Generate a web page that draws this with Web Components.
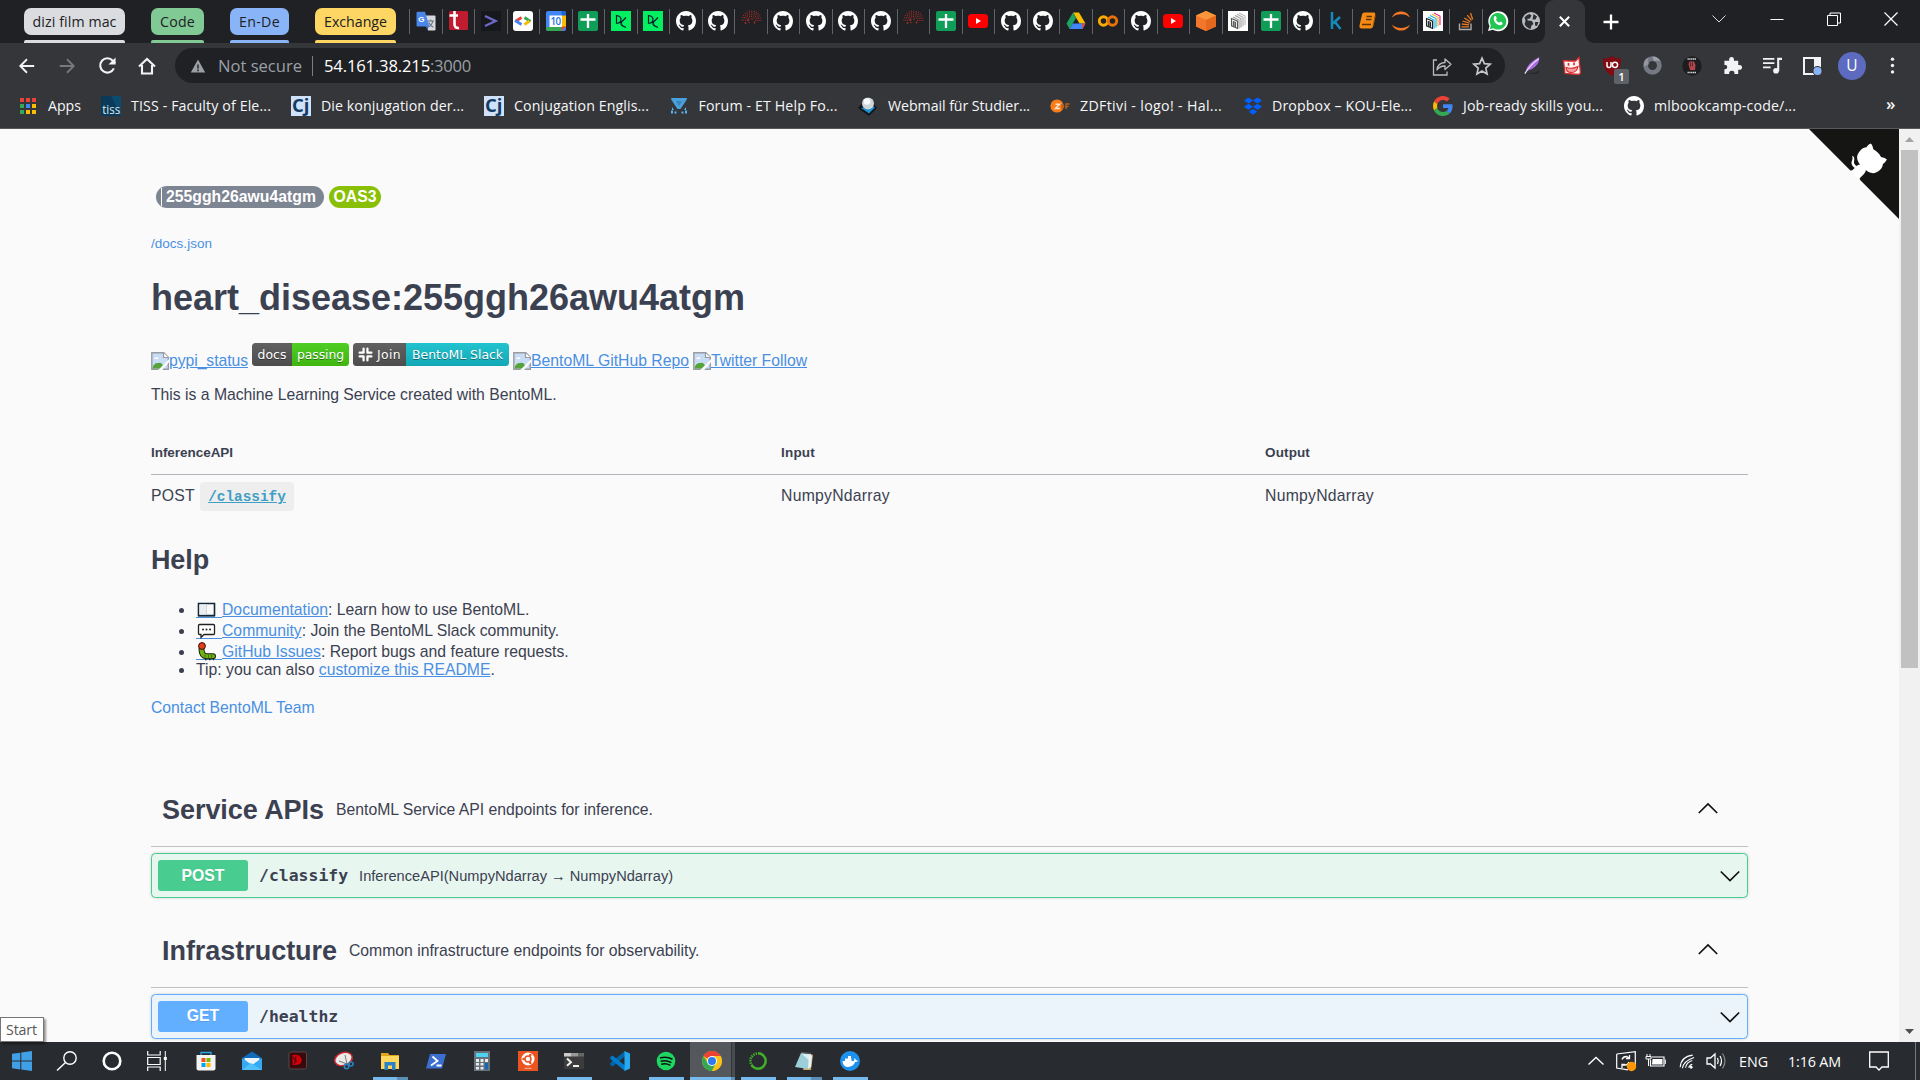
<!DOCTYPE html>
<html lang="en">
<head>
<meta charset="utf-8">
<title>heart_disease:255ggh26awu4atgm</title>
<style>
html,body{margin:0;padding:0;width:1920px;height:1080px;overflow:hidden;background:#fafafa}
body{font-family:"Liberation Sans",sans-serif}
</style>
</head>
<body>
<desktop-screen></desktop-screen>
<script>
const GH='<path fill="#fff" d="M8 0C3.58 0 0 3.58 0 8c0 3.54 2.29 6.53 5.47 7.59.4.07.55-.17.55-.38v-1.6c-2.01.37-2.53-.49-2.69-.94-.09-.23-.48-.94-.82-1.13-.28-.15-.68-.52-.01-.53.63-.01 1.08.58 1.23.82.72 1.21 1.87.87 2.33.66.07-.52.28-.87.51-1.07-1.78-.2-3.64-.89-3.64-3.95 0-.87.31-1.59.82-2.15-.08-.2-.36-1.02.08-2.12 0 0 .67-.21 2.2.82A7.6 7.6 0 0 1 8 3.86c.68 0 1.36.09 2 .27 1.53-1.04 2.2-.82 2.2-.82.44 1.1.16 1.92.08 2.12.51.56.82 1.27.82 2.15 0 3.07-1.87 3.75-3.65 3.95.29.25.54.73.54 1.48v2.2c0 .21.15.46.55.38A8 8 0 0 0 16 8c0-4.42-3.58-8-8-8Z"/>';
let reds='';
[[9.5,13],[7.7,11],[5.9,9],[4.1,7]].forEach(([r,n],k)=>{for(let i=0;i<n;i++){const a=Math.PI*(1.02+i*0.98/(n-1));reds+=`<circle cx="${(10.5+r*Math.cos(a)).toFixed(1)}" cy="${(9.5+r*Math.sin(a)).toFixed(1)}" r=".6"/>`}});
const bento=(a,b,c,d)=>`<rect width="20" height="20" fill="#fff"/><g fill="none" stroke-width="1.1"><path d="M11 2l6 3v9" stroke="${a}"/><path d="M9 3.300l6 3v9" stroke="${b}"/><path d="M7 4.600l6 3v9" stroke="${c}"/><path d="M5 6l6 3v8.500" stroke="${c}"/><path d="M3.500 7.500l6 2.700v7.300l-6-2.700z" stroke="${d}"/><path d="M7.500 11.500L5.300 10.500v4l2.200 1zM5.300 12.500l2.200 1" stroke="${d}"/></g>`;
const ICONS={
gh:['0 0 16 16',GH],
translate:['0 0 20 20','<path d="M8 4.500h10.500q1 0 1 1v13q0 1-1 1H12z" fill="#d6d9dc"/><path d="M11.500 10h6.500m-3.200-1.500V10m2 0c-.5 3-2.500 5-4.500 6m.5-4.500c1 2 3 4 4.500 4.800" stroke="#66757f" fill="none" stroke-width="1.100"/><path d="M12.500 15.500l-1 3.500-2-3.500z" fill="#2f5fb8"/><path d="M1.500.8H9L13.500 15.500H1.500Q.5 15.500.5 14.500V1.800Q.5.8 1.500.8z" fill="#4a86e8"/><text x="2.300" y="10.800" font-size="8" font-weight="bold" fill="#fff" font-family="Liberation Sans">G</text>'],
tured:['0 0 20 20','<rect x="1" width="19" height="19" rx="1.500" fill="#c01c30"/><path d="M6.500 0v13q0 4.500 4.500 4M1.500 4.500h8.500" stroke="#fff" stroke-width="2.600" fill="none"/>'],
gt:['0 0 20 20','<rect width="20" height="20" fill="#17181b"/><path d="M4 5l10.500 5L4 15" fill="none" stroke="#6c68c9" stroke-width="2.400"/>'],
gdev:['0 0 20 20','<rect width="20" height="20" rx="3" fill="#fff"/><g fill="none" stroke-width="2.800"><path d="M8.500 6.500L3 10" stroke="#ea4335"/><path d="M2 9.500l6.500 4" stroke="#4285f4"/><path d="M11.500 6.500l6 4" stroke="#34a853"/><path d="M11.500 13.500l5-3.500" stroke="#fbbc04"/></g>'],
cal:['0 0 20 20','<rect width="20" height="20" rx="2" fill="#4285f4"/><path d="M15.500 0H18q2 0 2 2v3h-4.500z" fill="#1967d2"/><path d="M15.500 4.500H20V16h-4.500z" fill="#fbbc04"/><path d="M0 16h15.500v4H2q-2 0-2-2z" fill="#34a853"/><path d="M15.500 15.500H20L15.500 20z" fill="#ea4335"/><rect x="3.500" y="4.500" width="12.500" height="11.500" fill="#fff"/><text x="4.600" y="13.800" font-size="9.800" fill="#1a73e8" font-family="Open Sans" font-weight="600" textLength="10.500">10</text>'],
sheets:['0 0 20 20','<rect width="20" height="20" rx="2" fill="#0f9d58"/><path d="M10 3v14M2.500 8.500h15" stroke="#fff" stroke-width="2.300"/>'],
dc:['0 0 20 20','<rect width="20" height="20" fill="#03ef62"/><path d="M5.500 12.500V4.500q4.500.5 4.500 4t-4.500 4M15 6.500l-4 4q-2 2 0 4l4 2M9.500 11.500l2.500 4" fill="none" stroke="#05192d" stroke-width="1.200"/>'],
dots:['0 0 20 20',`<g fill="#a8302a">${reds}<circle cx="7.500" cy="9" r=".9"/><circle cx="11" cy="8" r=".8"/><circle cx="13.500" cy="11.500" r=".9"/><circle cx="4.500" cy="12" r=".9"/><circle cx="8" cy="11.500" r=".7"/></g>`],
yt:['0 0 20 20','<rect y="3" width="20" height="14" rx="3.500" fill="#f00"/><path d="M8 7v6l5-3z" fill="#fff"/>'],
drive:['0 0 20 20','<path d="M7 1.500h6l6.500 11h-6z" fill="#fbbc04"/><path d="M7 1.500l3 5.500-6.500 11L.5 12.500z" fill="#1ea362"/><path d="M6.700 12.500h12.800L16.500 18h-13z" fill="#4285f4"/><path d="M16 12.500h3.500l-3 5.500z" fill="#ea4335"/>'],
colab:['0 0 20 20','<circle cx="5.500" cy="10" r="4.200" fill="none" stroke="#f9ab00" stroke-width="2.900"/><circle cx="14.500" cy="10" r="4.200" fill="none" stroke="#e8710a" stroke-width="2.900"/>'],
cube:['0 0 20 20','<path d="M10 0l10 4.500v11L10 20 0 15.500v-11z" fill="#f58536"/><path d="M10 0l10 4.500L10 9 0 4.500z" fill="#f9953b"/><path d="M0 4.500L10 9v11L0 15.500z" fill="#f2762b"/><path d="M20 4.500v11L10 20V9z" fill="#e5691c"/>'],
bento:['0 0 20 20',bento('#bbb','#aaa','#999','#555')],
bentoc:['0 0 20 20',bento('#e91e8c','#f6b417','#19a9dd','#222')],
k:['0 0 20 20','<path d="M6 1v17M14 6l-7 6.500M9 11l5.500 7" fill="none" stroke="#148abb" stroke-width="2.500"/>'],
book:['0 0 20 20','<path d="M6.500 1.500h9.500q1.500.2 1.200 2L15 15.500q-.5 2-2.500 2H3.500q-2.500-.5-2-3L4 3.500q.5-2 2.500-2z" fill="#f58a14"/><path d="M8.500 5.500h5.500M8 8.500h5.500M4 13.500h9" stroke="#5e3502" fill="none" stroke-width="1.400"/><path d="M17.300 4.500L15 15" stroke="#a85a08" fill="none"/>'],
jup:['0 0 20 20','<path d="M1 6.500C4-1.500 16-1.500 19 6.500 15 2 5 2 1 6.500zM1 13.500c3 8 15 8 18 0-4 4.500-14 4.500-18 0z" fill="#f37726"/>'],
so:['0 0 20 20','<path d="M3.500 12.500v6h11.500V12.500" fill="none" stroke="#a9abad" stroke-width="1.400"/><path d="M5.500 15.800h7.500M5.800 13l7.300.9M6.500 10l7 2.200M8.300 7l6 3.700M11.300 4.200l4.200 5.200M14.500 2l2.200 6.500" stroke="#e87a22" stroke-width="1.300"/>'],
wa:['0 0 20 20','<path d="M0 20l1.500-5A10 10 0 1 1 5 18.700z" fill="#fff"/><path d="M1.800 18.200l1-3.800A8.300 8.300 0 1 1 5.400 17.200z" fill="#23c653"/><path d="M6.200 5.500q1.400-1.300 2.200.7l.4 1.300-.9 1.300q1.100 2.200 3.300 3l1.200-1.200 2.200 1.100q.3 2-2.100 2.600-3.500.2-6-3.800Q5 7.500 6.200 5.500z" fill="#fff"/>'],
globe:['0 0 20 20','<circle cx="10" cy="10" r="9" fill="#b9bcc0"/><path d="M3.500 6.500q2-3 5-3.500l2 1.500-1.500 3-3 .5 1 1.500 4 .5 1.500 3-2 1.500-1 3.500Q5 16.500 3.500 13l1-3zM12.500 3l3.500 2.500-1.500 3h-3zM14 11h3.500l-1.500 4-2-.5z" fill="#2d2e31"/>'],
x:['0 0 20 20','<path d="M4.500 4.500l11 11M15.500 4.500l-11 11" stroke="#fff" stroke-width="2.400"/>'],
plus:['0 0 20 20','<path d="M10 2.500v15M2.500 10h15" stroke="#fff" stroke-width="2.300"/>'],
wchev:['0 0 20 20','<path d="M3.500 6.500L10 13l6.500-6.500" fill="none" stroke="#ddd"/>'],
wmin:['0 0 20 20','<path d="M3.500 10.500h13" stroke="#fff"/>'],
wmax:['0 0 20 20','<path d="M3.500 6.500h10v10h-10zM6 6V4h10.500v10H14" fill="none" stroke="#fff"/>'],
wclose:['0 0 20 20','<path d="M3.500 3.500l13 13M16.500 3.500l-13 13" stroke="#fff" stroke-width="1.200"/>'],
back:['0 0 20 20','<path d="M18 10H3M10 2.500L2.500 10l7.500 7.500" fill="none" stroke="#f1f3f4" stroke-width="2"/>'],
fwd:['0 0 20 20','<path d="M2 10h15M10 2.500l7.500 7.500-7.500 7.500" fill="none" stroke="#77797c" stroke-width="2"/>'],
reload:['0 0 20 20','<path d="M16.700 13A7.500 7.500 0 1 1 15.500 5L18 7.500" fill="none" stroke="#f1f3f4" stroke-width="2.200"/><path d="M18.500 1.500v7.500H11z" fill="#f1f3f4"/>'],
home:['0 0 20 20','<path d="M2 10.500L10 3l8 7.500M5 9v8.500h10V9" fill="none" stroke="#f1f3f4" stroke-width="2.100"/>'],
warn:['0 0 20 20','<path d="M10 2l9 16H1z" fill="#9aa0a6"/><path d="M10 8v5M10 14.500v2" stroke="#202124" stroke-width="1.800"/>'],
share:['0 0 20 20','<path d="M5 4H1.500v15H15v-3.500" fill="none" stroke="#b9bcbf" stroke-width="1.300"/><path d="M5 14q.5-7 8-7.500V3l6 5.300-6 5.200V10q-5-.3-8 4z" fill="none" stroke="#b9bcbf" stroke-width="1.300" stroke-linejoin="round"/>'],
star:['0 0 20 20','<path d="M10 2.200l2.400 5.400 5.800.6-4.400 3.900 1.300 5.900L10 15l-5.100 3 1.300-5.900L1.800 8.200l5.800-.6z" fill="none" stroke="#c4c7ca" stroke-width="1.700"/>'],
feather:['0 0 20 20','<path d="M2 19q3-1.500 8-1.500t7-3q1 4-4 4.500z" fill="#28292d"/><path d="M3 16.500Q3.500 8 17 1 18 6 13 11q-4 4-8.500 4.500z" fill="#a96be0"/><path d="M2 18.500Q7 10 16.500 3" stroke="#eadcfb" fill="none" stroke-width="1.300"/>'],
cat:['0 0 20 20','<path d="M1.500 4.500l5 .5 7 0L17 1.500l.5 6L18.500 17 17 18.500 3 17.500z" fill="#fbf3f2" stroke="#d92a2c" stroke-width="1.300"/><path d="M6.500 7v2.800M12 6.500v2.800" stroke="#d92a2c" stroke-width="1.600"/><path d="M4 11.500q6 2 12-1-1 6-6.500 6T4 11.500z" fill="#f39a9a" stroke="#d92a2c" stroke-width="1.100"/>'],
ublock:['0 0 20 20','<path d="M10 0q4 3 9 2.500 1 12-9 17.500Q0 14.500 1 2.500 6 3 10 0z" fill="#800b12"/><path d="M5 6v3.500q0 2 2 2t2-2V6" fill="none" stroke="#fff" stroke-width="1.500"/><circle cx="13" cy="8.800" r="2.600" fill="none" stroke="#fff" stroke-width="1.500"/>'],
ring:['0 0 20 20','<circle cx="10" cy="10" r="7.200" fill="none" stroke="#747983" stroke-width="5"/><path d="M1 11Q-.5 4 6 1.500q-2 5 .5 7z" fill="#9297a1"/><path d="M10 .500a9.500 9.500 0 0 1 8.500 5Q14 4 11.500 5.500z" fill="#9da2ab"/>'],
hand:['0 0 20 20','<circle cx="10" cy="10" r="9.700" fill="#1d1d1f"/><path d="M5.500 3h9M5.500 16.500h9" stroke="#ddd" stroke-width="1.700" stroke-dasharray="1.300 .5"/><path d="M6.500 8l1-2.500h4.500l1.500 3.500-.5 5H8z" fill="#b5464b"/><path d="M8.500 6.500v4m2-4v4" stroke="#1d1d1f" stroke-width=".7"/>'],
puzzle:['0 0 20 20','<path d="M1.500 5h5Q6 1 9 1t2.500 4H16v4.500q4-.5 4 2.500t-4 2.500V19h-4q.5-3.500-2.700-3.500T6.500 19h-5v-5q3 .2 3-2.500T1.500 9.500z" fill="#f1f3f4"/>'],
music:['0 0 20 20','<path d="M0 3h12M0 7.500h12M0 12h8" stroke="#f1f3f4" stroke-width="2"/><path d="M16 16V3H20" stroke="#f1f3f4" stroke-width="2.200" fill="none"/><circle cx="13.700" cy="15.500" r="3" fill="#f1f3f4"/>'],
panel:['0 0 20 20','<path d="M2 2h16v16H2z" fill="none" stroke="#f1f3f4" stroke-width="2"/><path d="M12 2h6v10h-6z" fill="#f1f3f4"/><circle cx="15.500" cy="15" r="5" fill="#35363a"/><circle cx="15.500" cy="15" r="4" fill="#8ab4f8"/>'],
dots3:['0 0 20 20','<g fill="#f1f3f4"><circle cx="10" cy="2.500" r="2"/><circle cx="10" cy="10" r="2"/><circle cx="10" cy="17.500" r="2"/></g>'],
apps:['0 0 20 20','<path d="M2 2h4v4H2zM8 2h4v4H8zM14 2h4v4h-4z" fill="#ea4335"/><path d="M2 8h4v4H2zM2 14h4v4H2z" fill="#34a853"/><path d="M8 8h4v4H8z" fill="#4285f4"/><path d="M14 8h4v4h-4zM14 14h4v4h-4zM8 14h4v4H8z" fill="#fbbc04"/>'],
tiss:['0 0 20 20','<rect width="20" height="20" fill="#0a3a58"/><path d="M10 0h10v20z" fill="#0c4a70"/><text x="1.200" y="17.500" font-size="12" textLength="18" lengthAdjust="spacingAndGlyphs" fill="#dfe9f0" font-family="Open Sans">tiss</text>'],
cj:['0 0 20 20','<rect width="20" height="20" fill="#cfe2fa"/><text x="1" y="15.500" font-size="17" font-weight="bold" fill="#123a63" textLength="17.500" lengthAdjust="spacingAndGlyphs" font-family="Open Sans">Cj</text>'],
forum:['0 0 20 20','<path d="M2 2h16l-.5 2L11.500 13h-3L2.500 4z" fill="#4aa0dc"/><path d="M7 5h6l-3 5.500z" fill="#3a84bd"/><path d="M3 11l2 3H3zM17 11l-2 3h2zM2 14.500h2v3H2zM5.500 15.500h2v2h-2zM16 14.500h2v3h-2zM12.500 15.500h2v2h-2z" fill="#5bb4f0"/>'],
webmail:['0 0 20 20','<path d="M10 .5L19 12l-8 8-11-8z" fill="#101418"/><path d="M3 12l8 5.500 6-6-2-1.500z" fill="#1d8fca"/><circle cx="10" cy="7.500" r="6" fill="#cfd6da"/><circle cx="9" cy="5.500" r="3.300" fill="#f8fafb"/>'],
zdf:['0 0 20 20','<circle cx="7" cy="10" r="6.600" fill="#fa7d19"/><path d="M5.500 8.200h4L5.500 12.500h4.500" fill="none" stroke="#fde3cd" stroke-width="1.500"/><path d="M12 8v4.500M12 8q3.500 2 0 4.500M16 13V8h3.500M16 10.500h2.500" stroke="#b4621f" stroke-width="1.400" fill="none"/>'],
dropbox:['0 0 20 20','<path d="M5.500 1.500l4.500 3-4.500 3-4.500-3zM14.500 1.500l4.500 3-4.500 3-4.500-3zM5.500 7.700l4.500 3-4.500 3-4.500-3zM14.500 7.700l4.500 3-4.500 3-4.500-3zM10 13l4.200 2.800L10 18.700l-4.200-2.900z" fill="#0061ff"/>'],
google:['0 0 48 48','<path fill="#EA4335" d="M24 9.500c3.540 0 6.710 1.220 9.210 3.600l6.850-6.850C35.900 2.380 30.470 0 24 0 14.620 0 6.510 5.380 2.560 13.220l7.980 6.190C12.430 13.720 17.740 9.500 24 9.500z"/><path fill="#4285F4" d="M46.980 24.550c0-1.570-.15-3.090-.38-4.550H24v9.020h12.940c-.58 2.960-2.260 5.480-4.780 7.180l7.730 6c4.510-4.180 7.090-10.360 7.090-17.650z"/><path fill="#FBBC05" d="M10.530 28.590c-.48-1.450-.76-2.990-.76-4.590s.27-3.140.76-4.590l-7.980-6.190C.92 16.460 0 20.120 0 24c0 3.880.92 7.540 2.560 10.780l7.970-6.190z"/><path fill="#34A853" d="M24 48c6.480 0 11.930-2.130 15.890-5.810l-7.730-6c-2.150 1.450-4.920 2.300-8.160 2.300-6.260 0-11.570-4.220-13.470-9.910l-7.980 6.190C6.510 42.620 14.620 48 24 48z"/>'],
broken:['0 0 18 18','<path d="M.8.800h12l4.500 4.500v11.900H.8z" fill="#c9dcf5" stroke="#979ca3" stroke-width="1.400"/><path d="M12.500 1v4.500h5" fill="#fff" stroke="#979ca3" stroke-width="1.200"/><path d="M3 7q.5-2 2-1.500 2-1 2.500 1.500z" fill="#fff"/><path d="M1.500 16.500q1-6 6-5.500 4-1 5.500 5.500z" fill="#56a33b"/><path d="M7 18.200L18.200 7v3L11 18.200z" fill="#fafafa"/>'],
slack:['0 0 14 14','<g stroke="#fff" stroke-width="2.100" stroke-linecap="round"><path d="M5.200 1.500v3.800M8.800 1.500v3.800M5.200 8.800v3.700M8.800 8.800v3.700M1.500 5.300h3.700M8.800 5.300h3.700M1.500 8.800h3.700M8.800 8.800h3.700"/></g>'],
ebook:['0 0 19 18','<path d="M1.500 3h16v12h-16z" fill="#fafafa" stroke="#10283c" stroke-width="1.600"/><path d="M9.500 3.500v10.500" stroke="#c4cbd0" stroke-width=".8"/><path d="M1 15.300h17" stroke="#10283c" stroke-width="1.500"/><path d="M2.500 4h6.500v10H2.500z" fill="#ededed"/>'],
echat:['0 0 19 18','<path d="M2.500 3h14q1 0 1 1v8q0 1-1 1H7l-3 3v-3H2.500q-1 0-1-1V4q0-1 1-1z" fill="#fff" stroke="#222" stroke-width="1.300"/><g fill="#222"><circle cx="6" cy="8" r="1"/><circle cx="9.500" cy="8" r="1"/><circle cx="13" cy="8" r="1"/></g>'],
ebug:['0 0 19 18','<path d="M4.500 6.500q0 7 5 7.200h6.500" stroke="#15220a" stroke-width="6" fill="none" stroke-linecap="round"/><path d="M4.500 6.500q0 7 5 7.200h6.500" stroke="#6fb012" stroke-width="4" fill="none" stroke-linecap="round"/><path d="M8 12v3M11.500 12v3.500M14.500 12v3.500" stroke="#416f08"/><circle cx="5" cy="3.500" r="3.400" fill="#e33b1c" stroke="#3a1108"/><path d="M8 17h1.500M12 17h1.500M16 17h1" stroke="#15220a" stroke-width="1.500"/>'],
up:['0 0 20 20','<path d="M.8 14L10 5l9.200 9" fill="none" stroke="#111" stroke-width="1.700"/>'],
down:['0 0 20 20','<path d="M.8 5.500L10 14.500l9.200-9" fill="none" stroke="#111" stroke-width="1.700"/>'],
win:['0 0 20 20','<path d="M0 2.800L8.300 1.700v7.800H0zM9.300 1.500L20 0v9.500H9.300zM0 10.500h8.300v7.900L0 17.200zM9.300 10.500H20V20L9.300 18.500z" fill="#419fe6"/>'],
search:['0 0 20 20','<circle cx="13" cy="7" r="6.200" fill="none" stroke="#fff" stroke-width="1.400"/><path d="M8.500 11.500L0 19.500" stroke="#fff" stroke-width="1.500"/>'],
cortana:['0 0 20 20','<circle cx="10" cy="10" r="8.300" fill="none" stroke="#fff" stroke-width="2.600"/>'],
taskview:['0 0 20 20','<path d="M.7 0v4h12.500V0M.7 20v-4h12.500v4M.7 6.500h12.500v7H.7z" fill="none" stroke="#fff" stroke-width="1.200"/><path d="M18.300 0v20" stroke="#fff"/><path d="M16.800 6h3v3h-3z" fill="#fff"/>'],
store:['0 0 20 20','<path d="M5 5V1.500h10V5" stroke="#29a7e8" fill="none" stroke-width="1.300"/><path d="M.5 4h19v13.500q0 2-2 2h-15q-2 0-2-2z" fill="#f4f4f4"/><path d="M5.500 7h4v4h-4z" fill="#f25022"/><path d="M10.500 7h4v4h-4z" fill="#7fba00"/><path d="M5.500 12h4v4h-4z" fill="#00a4ef"/><path d="M10.500 12h4v4h-4z" fill="#ffb900"/>'],
mail:['0 0 20 20','<path d="M0 7l10-6.500L20 7v12H0z" fill="#0f6cbd"/><path d="M2.500 7h15v8h-15z" fill="#eef4fa"/><path d="M0 7l10 7 10-7v12H0z" fill="#33aaf2"/><path d="M0 19l9-7 11 7z" fill="#52c0fb"/>'],
redd:['0 0 20 20','<rect x="1" y="1" width="17.500" height="17" rx="2" fill="#39090b"/><rect x="1" y="1" width="17.500" height="17" rx="2" fill="none" stroke="#56484a"/><path d="M4.500 4q8-1.500 9 4.500T4.500 14z" fill="#d3000c"/><path d="M8 5l-1.500 8M5 6l4 5" stroke="#6b0008" stroke-width="1.300"/>'],
snip:['0 0 20 20','<ellipse cx="9.500" cy="8" rx="9" ry="6.300" transform="rotate(-20 9.500 8)" fill="#ece9e9" stroke="#cf2a2f" stroke-width="1.500"/><path d="M5 10l8 3M11 4l2 9" stroke="#777"/><circle cx="12.500" cy="15.500" r="2.200" fill="none" stroke="#2a83c4" stroke-width="1.600"/><circle cx="17" cy="13" r="2" fill="none" stroke="#2a83c4" stroke-width="1.600"/>'],
explorer:['0 0 20 20','<path d="M1 2h7l1.500 2H19v14H1z" fill="#e0a31a"/><path d="M1 5h18v13H1z" fill="#ffd75e"/><path d="M4.500 19v-8h11v8h-3.500v-4.500H8V19z" fill="#2b83c6"/>'],
ps:['0 0 20 20','<path d="M4 3h16l-4 14.500H0z" fill="#3a6fd0"/><path d="M6.500 5.500l5 4.500-6.500 4.500M10.500 14.500h5" stroke="#fff" stroke-width="1.800" fill="none"/>'],
calc:['0 0 20 20','<rect x="2" width="16" height="20" fill="#66717a"/><path d="M4 2h12v4H4z" fill="#4fd2f2"/><path d="M4 8h3v3H4zM8.500 8h3v3h-3zM13 8h3v3h-3zM4 12h3v2.500H4zM8.500 12h3v2.500h-3zM4 16h3v2.500H4zM8.500 16h3v2.500h-3z" fill="#e8eaec"/><path d="M13 12h3v6.500h-3z" fill="#1267b8"/>'],
ubuntu:['0 0 20 20','<rect width="20" height="20" fill="#e95420"/><circle cx="10" cy="8" r="6.500" fill="#fff"/><circle cx="10" cy="8" r="3" fill="none" stroke="#e95420" stroke-width="1.600"/><circle cx="5.500" cy="8" r="1.300" fill="#e95420"/><circle cx="12.300" cy="4" r="1.300" fill="#e95420"/><circle cx="12.300" cy="12" r="1.300" fill="#e95420"/><path d="M6.500 17.300h7" stroke="#f6b69f"/>'],
term:['0 0 20 20','<rect y="2" width="20" height="16" fill="#3c3c3c"/><path d="M0 2h7v3.500H0z" fill="#ccc"/><path d="M7 2h7v3.500H7z" fill="#999"/><path d="M14 2h6v3.500h-6z" fill="#666"/><path d="M3 7.500l4 3.700-4 3.500M9 15h6" stroke="#eee" stroke-width="2" fill="none"/>'],
vscode:['0 0 20 20','<path d="M15 0v5.500L2.500 15.500.3 14V12z" fill="#0065a9"/><path d="M15 20v-5.500L2.500 4.500.3 6V8z" fill="#007acc"/><path d="M14.500 0L20 2.500v15L14.500 20z" fill="#28a8ee"/>'],
spotify:['0 0 20 20','<circle cx="10" cy="10" r="9.300" fill="#1ed760"/><path d="M4 7q6.500-2 12.500 1.200M4.600 10.300q5.500-1.700 10.800 1.300M5.200 13.300q4.800-1.400 9.200 1.100" stroke="#111" stroke-width="1.600" fill="none"/>'],
chrome:['0 0 20 20','<circle cx="10" cy="10" r="10" fill="#fbc116"/><path d="M10 10L1.340 5A10 10 0 0 1 18.660 5z" fill="#ea4335"/><path d="M1.340 5A10 10 0 0 0 10 20l4.200-8.500L10 10 5.500 11.500z" fill="#34a853"/><path d="M10 5h8.660A10 10 0 0 1 10 20l4.300-7.500z" fill="#fbc116"/><circle cx="10" cy="10" r="5" fill="#fff"/><circle cx="10" cy="10" r="4" fill="#2e79ee"/>'],
conda:['0 0 20 20','<circle cx="10" cy="10" r="7.700" fill="none" stroke="#43b02a" stroke-width="2.500"/><path d="M10 2.300A7.700 7.700 0 0 0 4 15" fill="none" stroke="#282b30" stroke-width="3" stroke-dasharray="1 1.500"/>'],
note:['0 0 20 20','<path d="M15 2l4 2-2 15H9z" fill="#caa76a"/><path d="M7 2l10 1-3 15L1 16z" fill="#9ccfd8"/><path d="M7 2l10 1-1.500 7z" fill="#d8eff2"/><path d="M15 3l3 2-1 11-3 2z" fill="#e9f2f4"/><path d="M7 1.500l10 1" stroke="#555" stroke-width="1.500"/>'],
docker:['0 0 20 20','<circle cx="10" cy="10" r="10" fill="#1d91ee"/><path d="M2.500 10H14q.5-2 0-3 1.800.7 2 2.300l2 .2q-.8 1.700-2.800 1.600Q13 16 8 16 3 16 2.500 10z" fill="#fff"/><path d="M5 7.500h6.500V10H5zM8 5h3v3H8z" fill="#fff"/>'],
tchev:['0 0 20 20','<path d="M2.500 13.500L10 6.500l7.500 7" fill="none" stroke="#fff" stroke-width="1.400"/>'],
update:['0 0 20 20','<path d="M.7 3L19.300.7v14M12 18.800L.7 17V3" fill="none" stroke="#fff" stroke-width="1.200"/><path d="M6 8.500q1-3 4.500-3l3 1.500M13.500 4v3.500H10M13 11q-1 3-4 3H6M6 17v-3.500h3" fill="none" stroke="#fff" stroke-width="1.300"/><circle cx="15.500" cy="15.500" r="4.700" fill="#ff9800"/>'],
battery:['0 0 20 20','<path d="M5.500 6h12.500v9H4.500V9" fill="none" stroke="#fff" stroke-width="1.200"/><path d="M6.500 8h10v5.500H6z" fill="#fff"/><path d="M19.300 8.500V13" stroke="#fff"/><path d="M1 3v3M4 3v3M0 5.500h5v2.500H0zM2.500 8v7" fill="none" stroke="#fff"/>'],
wifi:['0 0 20 20','<g fill="none" stroke="#fff" stroke-width="1.200"><path d="M6 18q1-8 13-12"/><path d="M3.500 17Q4.500 5 17.500 3.500" /><path d="M9.500 17.500Q10.500 11.500 17 9.500"/><path d="M13 17.500q.5-3 4-4"/></g><circle cx="15.700" cy="17" r="1.600" fill="#fff"/>'],
sound:['0 0 20 20','<path d="M1 7h3.500L9 3v14l-4.500-4H1z" fill="none" stroke="#fff" stroke-width="1.300"/><path d="M11.500 7q1.500 3 0 6M14 5q3 5 0 10" fill="none" stroke="#fff" stroke-width="1.200"/><path d="M16.500 2.500q5 7.500 0 15" fill="none" stroke="#888" stroke-width="1.200"/>'],
notif:['0 0 20 20','<path d="M.7 1h18.600v15H13l-3 3-3-3H.7z" fill="none" stroke="#fff" stroke-width="1.300"/>']
};
const def=(name,tpl,after)=>customElements.define(name,class extends HTMLElement{
  connectedCallback(){if(this.shadowRoot)return;this.attachShadow({mode:'open'}).innerHTML=typeof tpl==='function'?tpl(this):tpl;if(after)after(this)}
});
/* Vector icon: name picks the drawing, s the box size. */
def('v-icon',e=>{const [vb,g]=ICONS[e.getAttribute('name')];const s=e.getAttribute('s')||20;
 return `<style>:host{display:block;flex:none;width:${s}px;height:${s}px}svg{display:block;overflow:visible}</style><svg width="${s}" height="${s}" viewBox="${vb}">${g}</svg>`});
/* Text run spaced to an exact width. */
def('fit-text','<style>:host{display:inline-block;white-space:pre}</style><span><slot></slot></span>',e=>{
 const w=+e.getAttribute('w'),s=e.shadowRoot.querySelector('span'),n=s.getBoundingClientRect().width,c=e.textContent.length;
 if(w&&n){s.style.letterSpacing=((w-n)/c).toFixed(4)+'px';e.style.width=w+'px'}
});
def('tab-group',e=>`<style>:host{display:flex;flex-direction:column;width:${e.getAttribute('w')}px;margin-left:${e.getAttribute('ml')}px;flex:none}
 .c{margin-top:8px;height:27px;border-radius:7px;background:${e.getAttribute('c')};display:flex;align-items:center;justify-content:center;color:#202124;font:14.2px/25px "Open Sans",sans-serif}
 .u{margin-top:5px;height:3px;border-radius:2px 2px 0 0;background:${e.getAttribute('c')}}fit-text{margin-bottom:1px}</style><div class="c"><slot></slot></div><div class="u"></div>`);
def('tab-strip',`<style>:host{display:flex;height:43px;background:#202124;align-items:flex-start;overflow:hidden}
 .t{display:flex;margin-left:13px;flex:none;width:1135.500px}.f{box-sizing:border-box;width:32.500px;height:43px;padding:11px 0 0 1px;display:flex;justify-content:center;position:relative;flex:none}
 .f::before{content:"";position:absolute;left:0;top:9px;width:1px;height:25px;background:#5f6368}
 .a{width:40px;height:43px;background:#35363a;border-radius:9px 9px 0 0;display:flex;align-items:center;justify-content:center;position:relative;flex:none}
 .a::before,.a::after{content:"";position:absolute;bottom:0;width:9px;height:9px}.a::before{left:-9px;background:radial-gradient(circle at 0 0,transparent 8.500px,#35363a 9px)}.a::after{right:-9px;background:radial-gradient(circle at 9px 0,transparent 8.500px,#35363a 9px)}
 .p{width:54px;height:43px;display:flex;align-items:center;justify-content:center}
 .w{display:flex;margin-left:53px}.w div{width:57.300px;height:37px;display:flex;align-items:center;justify-content:center}</style>
 <tab-group ml="24" w="101" c="#dadce0"><fit-text w="84">dizi film mac</fit-text></tab-group>
 <tab-group ml="26" w="53" c="#81c995"><fit-text w="35">Code</fit-text></tab-group>
 <tab-group ml="26" w="59" c="#8ab4f8"><fit-text w="41">En-De</fit-text></tab-group>
 <tab-group ml="26" w="81" c="#fdd663"><fit-text w="63">Exchange</fit-text></tab-group>
 <div class="t">${'translate tured gt gdev cal sheets dc dc gh gh dots gh gh gh gh dots sheets yt gh gh drive colab gh yt cube bento sheets gh k book jup bentoc so wa globe'.split(' ').map(n=>`<div class="f"><v-icon name="${n}"></v-icon></div>`).join('')}</div>
 <div class="a"><v-icon name="x" s="17"></v-icon></div><div class="p"><v-icon name="plus"></v-icon></div>
 <div class="w"><div><v-icon name="wchev"></v-icon></div><div><v-icon name="wmin"></v-icon></div><div><v-icon name="wmax"></v-icon></div><div><v-icon name="wclose"></v-icon></div></div>`);
def('nav-bar',`<style>:host{display:flex;box-sizing:border-box;height:46px;padding-bottom:1px;background:#35363a;align-items:center;font:16.600px "Open Sans",sans-serif}
 .c{width:40px;height:40px;display:flex;align-items:center;justify-content:center;position:relative;flex:none}
 .l{display:flex;margin-left:7px}.o{margin-left:8px;width:1330px;height:35px;border-radius:18px;background:#202124;display:flex;align-items:center;color:#9aa0a6;flex:none}
 .o>v-icon:first-child{margin-left:15px}.n{margin-left:12px}.d{width:1px;height:20px;background:#7b7e82;margin:0 11px 0 10px}.u{color:#fff}.o>fit-text{margin-bottom:1px}
 .s{margin-left:auto;display:flex;margin-right:3px}.r{display:flex;margin-left:7px}
 .b{position:absolute;left:22px;top:23px;width:15px;height:15px;border-radius:2px;background:#5f6266;color:#fff;font-size:11.500px;font-weight:600;line-height:15px;text-align:center}
 .av{width:28px;height:28px;border-radius:50%;background:#5c6bc0;color:#fff;font-size:15.500px;line-height:27px;text-align:center}</style>
 <div class="l"><div class="c"><v-icon name="back" s="18"></v-icon></div><div class="c"><v-icon name="fwd" s="18"></v-icon></div><div class="c"><v-icon name="reload" s="19"></v-icon></div><div class="c"><v-icon name="home"></v-icon></div></div>
 <div class="o"><v-icon name="warn" s="16"></v-icon><fit-text class="n" w="84">Not secure</fit-text><div class="d"></div><fit-text class="u" w="106">54.161.38.215</fit-text><fit-text w="41">:3000</fit-text>
 <div class="s"><div class="c"><v-icon name="share"></v-icon></div><div class="c"><v-icon name="star"></v-icon></div></div></div>
 <div class="r"><div class="c"><v-icon name="feather" s="19"></v-icon></div><div class="c"><v-icon name="cat"></v-icon></div><div class="c"><v-icon name="ublock"></v-icon><div class="b">1</div></div><div class="c"><v-icon name="ring" s="19"></v-icon></div><div class="c"><v-icon name="hand" s="20"></v-icon></div><div class="c"><v-icon name="puzzle" s="19"></v-icon></div><div class="c"><v-icon name="music" s="19"></v-icon></div><div class="c"><v-icon name="panel"></v-icon></div><div class="c"><div class="av">U</div></div><div class="c"><v-icon name="dots3" s="17"></v-icon></div></div>`);
def('book-mark',e=>`<style>:host{display:flex;align-items:center;gap:${e.getAttribute('g')||11}px;width:${e.getAttribute('bw')}px;flex:none}</style><v-icon name="${e.getAttribute('icon')}"></v-icon><fit-text w="${e.getAttribute('w')}">${e.getAttribute('label')}</fit-text>`);
def('bookmarks-bar',`<style>:host{display:flex;box-sizing:border-box;height:40px;padding:0 0 6px 18px;background:#35363a;border-bottom:1px solid #58595c;color:#f5f6f7;font:14.200px "Open Sans",sans-serif;align-items:center}
 .m{margin-left:69px;font-size:17px;font-weight:600;padding-bottom:4px}</style>
 <book-mark icon="apps" g="10" bw="83" w="33" label="Apps"></book-mark><book-mark icon="tiss" g="10" bw="190" w="140" label="TISS - Faculty of Ele..."></book-mark>
 <book-mark icon="cj" g="10" bw="193" w="143" label="Die konjugation der..."></book-mark><book-mark icon="cj" g="10" bw="185" w="135" label="Conjugation Englis..."></book-mark>
 <book-mark icon="forum" g="9.500" bw="189" w="139" label="Forum - ET Help Fo..."></book-mark><book-mark icon="webmail" g="10" bw="192" w="142" label="Webmail für Studier..."></book-mark>
 <book-mark icon="zdf" g="10" bw="193" w="142" label="ZDFtivi - logo! - Hal..."></book-mark><book-mark icon="dropbox" g="9" bw="190" w="140" label="Dropbox – KOU-Ele..."></book-mark>
 <book-mark icon="google" g="10" bw="191" w="140" label="Job-ready skills you..."></book-mark><book-mark icon="gh" g="10" bw="193" w="142" label="mlbookcamp-code/..."></book-mark><span class="m">»</span>`);
def('status-badge',e=>`<style>:host{display:flex;height:23px;border-radius:3.500px;overflow:hidden;color:#fff;font:12.400px "DejaVu Sans",sans-serif;text-shadow:0 1px 0 #0006;margin-right:4px;flex:none}
 div{display:flex;align-items:center;justify-content:center;background:linear-gradient(#606060,#4d4d4d)}.l{width:${e.getAttribute('lw')}px;gap:4px}.r{width:${e.getAttribute('rw')}px;background:${e.getAttribute('c')}}</style>
 <div class="l"><slot name="i"></slot><slot name="l"></slot></div><div class="r"><slot></slot></div>`);
def('broken-img',e=>`<style>:host{display:flex;margin-top:9px;height:18px;color:#4990e2;margin-right:4px;flex:none}fit-text{line-height:17px;text-decoration:underline}</style><v-icon name="broken" s="18"></v-icon><fit-text w="${e.getAttribute('w')}">${e.getAttribute('alt')}</fit-text>`);
def('api-info',`<style>:host{display:flex;flex-direction:column;color:#3b4151;font-size:15.750px;line-height:18px}
 a{color:#4990e2}.v{display:flex;margin:57px 0 0 5px;height:22px;gap:5px;color:#fff;font-weight:bold;font-size:15.750px;line-height:22px}
 .v div{border-radius:11px;height:22px}.ver{background:#7d8492;width:168px;display:flex}.ver i{width:1px;height:18px;margin:2px 4px 0 5px;background:#fff}.oas{background:#89bf04;width:52px;text-align:center}
 .d{margin-top:27px;font-size:13.500px;line-height:17px;height:16px;color:#4990e2}h1{margin:26px 0 0;font-size:36px;line-height:42px}
 .b{display:flex;margin-top:24px;height:27px}p{margin:16px 0 0}
 .g{display:grid;grid-template-columns:630px 484px 483px}.h{margin-top:41px;font-size:13.500px;font-weight:bold;line-height:16px;padding-bottom:13px;border-bottom:1px solid #b1b4bb}
 .r{padding-top:7px;height:29px;line-height:27px}.r>div{display:flex}code{margin-left:5px;background:#eeeeee;border-radius:4px;width:94px;height:29px;text-align:center;font:bold 14.400px/31px "Liberation Mono",monospace;color:#419ec4;text-decoration:underline}
 h2{margin:33px 0 0;font-size:27px;line-height:32px}ul{margin:23px 0 0;padding:0 0 0 45px;list-style:none}li{height:21px;line-height:21px;display:flex;position:relative;white-space:pre}
 li::before{content:"";position:absolute;left:-17px;top:9px;width:5px;height:5px;border-radius:50%;background:#3b4151}li:last-child{height:15px;line-height:15px}li:last-child::before{top:6px}
 .e{display:flex;width:26px;height:18px;border-bottom:1px solid #4990e2}.e v-icon{margin:1px 0 0 1px}.ct{margin-top:22px;color:#4990e2}</style>
 <div class="v"><div class="ver"><i></i><fit-text w="150">255ggh26awu4atgm</fit-text></div><div class="oas"><fit-text w="43">OAS3</fit-text></div></div>
 <div class="d"><fit-text w="61">/docs.json</fit-text></div><h1><fit-text w="594">heart_disease:255ggh26awu4atgm</fit-text></h1>
 <div class="b"><broken-img w="79" alt="pypi_status"></broken-img><status-badge lw="40" rw="57" c="linear-gradient(#4fce24,#3fb60f)"><fit-text slot="l" w="29">docs</fit-text><fit-text w="47">passing</fit-text></status-badge>
 <status-badge lw="53" rw="103" c="linear-gradient(#22c2cf,#12a8b6)"><v-icon slot="i" name="slack" s="15"></v-icon><fit-text slot="l" w="24">Join</fit-text><fit-text w="91">BentoML Slack</fit-text></status-badge>
 <broken-img w="158" alt="BentoML GitHub Repo"></broken-img><broken-img w="96" alt="Twitter Follow"></broken-img></div>
 <p><fit-text w="405.500">This is a Machine Learning Service created with BentoML.</fit-text></p>
 <div class="g h"><fit-text w="82">InferenceAPI</fit-text><fit-text w="34">Input</fit-text><fit-text w="45">Output</fit-text></div>
 <div class="g r"><div><fit-text w="44">POST</fit-text><code>/classify</code></div><fit-text w="109">NumpyNdarray</fit-text><fit-text w="109">NumpyNdarray</fit-text></div>
 <h2><fit-text w="58">Help</fit-text></h2>
 <ul><li><span class="e"><v-icon name="ebook" s="19"></v-icon></span><a><u>Documentation</u></a>: Learn how to use BentoML.</li><li><span class="e"><v-icon name="echat" s="19"></v-icon></span><a><u>Community</u></a>: Join the BentoML Slack community.</li><li><span class="e"><v-icon name="ebug" s="19"></v-icon></span><a><u>GitHub Issues</u></a>: Report bugs and feature requests.</li><li>Tip: you can also <a><u>customize this README</u></a>.</li></ul>
 <div class="ct"><fit-text w="163.500">Contact BentoML Team</fit-text></div>`);
def('api-section',e=>`<style>:host{display:flex;align-items:center;box-sizing:border-box;height:73px;padding:0 30px 0 11px;margin-top:${e.getAttribute('mt')}px;border-bottom:1px solid #c0c2c6;color:#3b4151;font-size:15.750px;flex:none}
 h3{margin:0;font-size:27px;line-height:32px}.d{margin-left:12px}v-icon{margin-left:auto;margin-top:-3px}</style><h3><slot></slot></h3><span class="d"><slot name="d"></slot></span><v-icon name="up"></v-icon>`);
def('api-operation',e=>{const c=e.getAttribute('c');return `<style>:host{display:flex;align-items:center;box-sizing:border-box;height:45px;margin-top:6px;padding:0 7px 0 6px;border:1px solid ${c};border-radius:4.500px;background:${e.getAttribute('bg')};box-shadow:0 0 3px #00000030;color:#3b4151;flex:none}
 .m{width:90px;height:31px;border-radius:3px;background:${c};color:#fff;font-size:15.750px;font-weight:bold;line-height:${e.getAttribute('lh')}px;text-align:center;text-shadow:0 1px 0 #0000001a}
 .p{margin-left:11px;font:bold 16.450px "DejaVu Sans Mono",monospace}.d{margin-left:11px;font-size:14.620px}v-icon{margin-left:auto}</style><div class="m">${e.getAttribute('method')}</div><span class="p">${e.getAttribute('path')}</span><span class="d"><slot></slot></span><v-icon name="down"></v-icon>`});
def('page-view',`<style>:host{display:flex;height:913px;background:#fafafa;overflow:hidden}main{width:1597px;margin-left:151px;display:flex;flex-direction:column;flex:none}
 .k{width:90px;height:90px;margin-left:61px;flex:none}.sb{width:21px;background:#f1f1f1;display:flex;flex-direction:column;align-items:center;flex:none}
 .th{width:17px;height:518px;background:#c1c1c1;margin-bottom:353px}.ar{height:21px;display:flex;align-items:center}</style>
 <main><api-info></api-info>
 <api-section mt="57"><fit-text w="162">Service APIs</fit-text><fit-text slot="d" w="317">BentoML Service API endpoints for inference.</fit-text></api-section>
 <api-operation c="#49cc90" bg="#e8f6f0" lh="31" method="POST" path="/classify"><fit-text w="314">InferenceAPI(NumpyNdarray → NumpyNdarray)</fit-text></api-operation>
 <api-section mt="17"><fit-text w="175">Infrastructure</fit-text><fit-text slot="d" w="350.500">Common infrastructure endpoints for observability.</fit-text></api-section>
 <api-operation c="#61affe" bg="#ebf3fb" lh="29" method="GET" path="/healthz"></api-operation></main>
 <svg class="k" viewBox="0 0 250 250"><path fill="#151513" d="M0,0 L115,115 L130,115 L142,142 L250,250 L250,0 Z"/><path fill="#fff" d="M128.3,109.0 C113.8,99.7 119.0,89.6 119.0,89.6 C122.0,82.7 120.5,78.6 120.5,78.6 C119.2,72.0 123.4,76.3 123.4,76.3 C127.3,80.9 125.5,87.3 125.5,87.3 C122.9,97.6 130.6,101.9 134.4,103.2"/><path fill="#fff" d="M115.0,115.0 C114.9,115.1 118.7,116.5 119.8,115.4 L133.7,101.6 C136.9,99.2 139.9,98.4 142.2,98.6 C133.8,88.0 127.5,74.4 143.8,58.0 C148.5,53.4 154.0,51.2 159.7,51.0 C160.3,49.4 163.2,43.6 171.4,40.1 C171.4,40.1 176.1,42.5 178.8,56.2 C183.1,58.6 187.2,61.8 190.9,65.4 C194.5,69.0 197.7,73.2 200.1,77.6 C213.8,80.2 216.3,84.9 216.3,84.9 C212.7,93.1 206.9,96.0 205.4,96.6 C205.1,102.4 203.0,107.8 198.3,112.5 C181.9,128.9 168.3,122.5 157.7,114.1 C157.9,116.9 156.7,120.9 152.7,124.9 L141.0,136.5 C139.8,137.7 141.6,141.9 141.8,141.8 Z"/></svg>
 <div class="sb"><div class="ar"><svg width="9" height="5"><path d="M0 5L4.500 0 9 5z" fill="#a3a3a3"/></svg></div><div class="th"></div><div class="ar"><svg width="9" height="5"><path d="M0 0h9L4.500 5z" fill="#505050"/></svg></div></div>`);
const apps=[['store'],['mail'],['redd'],['snip'],['explorer',2],['ps'],['calc'],['ubuntu'],['term',1],['vscode'],['spotify',1],['chrome',3],['conda',1],['note',2],['docker',1]];
def('task-bar',`<style>:host{display:flex;height:38px;background:#282b30;color:#fff;font:14.300px "Open Sans",sans-serif}
 .c{width:45px;height:38px;display:flex;align-items:center;justify-content:center;flex:none}.c:first-child{background:#43474b}.c v-icon{margin-right:1px}
 .a{display:flex;margin-left:3px}.i{width:46px;height:38px;display:flex;align-items:center;justify-content:center;position:relative}.i v-icon{margin-right:1px}
 .i[n]::after{content:"";position:absolute;left:6px;right:5px;bottom:0;height:3px;background:#76b9ed}.i[n="2"]::after{background:linear-gradient(90deg,#76b9ed 24px,#5c8fb8 24px)}
 .i[n="3"]{background:linear-gradient(90deg,#54585c 41px,#303338 41px,#303338 42px,#484c50 42px);width:45px;margin-left:1px}.i[n="3"]::after{left:0;right:0;background:linear-gradient(90deg,#76b9ed 41px,#5c8fb8 41px)}
 .y{display:flex;align-items:center;margin-left:708px;flex:none}.y div{width:30px;display:flex;justify-content:center}.t{margin-left:20px}.n{margin-left:28px}.y .z{width:1px;height:38px;background:#77797c;margin-left:26px}</style>
 <div class="c"><v-icon name="win"></v-icon></div><div class="c"><v-icon name="search"></v-icon></div><div class="c"><v-icon name="cortana"></v-icon></div><div class="c"><v-icon name="taskview"></v-icon></div>
 <div class="a">${apps.map(([n,k])=>`<div class="i"${k?` n="${k}"`:''}><v-icon name="${n}"></v-icon></div>`).join('')}</div>
 <div class="y"><div><v-icon name="tchev"></v-icon></div><div><v-icon name="update"></v-icon></div><div><v-icon name="battery"></v-icon></div><div><v-icon name="wifi" s="18"></v-icon></div><div><v-icon name="sound"></v-icon></div><fit-text style="margin-left:8px" w="29">ENG</fit-text><fit-text class="t" w="53">1:16 AM</fit-text><v-icon class="n" name="notif"></v-icon><div class="z"></div></div>`);
def('start-tip','<style>:host{position:absolute;left:0;top:1017px;box-sizing:border-box;width:44px;height:25px;background:#fff;border:1px solid #767676;color:#575757;font:14.200px/23px "Open Sans",sans-serif;box-shadow:2px 2px 2px #0006;padding-left:5px;z-index:2}</style><fit-text w="31">Start</fit-text>');
def('desktop-screen','<style>:host{display:flex;flex-direction:column;width:1920px;height:1080px;overflow:hidden;position:relative}</style><tab-strip></tab-strip><nav-bar></nav-bar><bookmarks-bar></bookmarks-bar><page-view></page-view><task-bar></task-bar><start-tip></start-tip>');
</script>
</body>
</html>
